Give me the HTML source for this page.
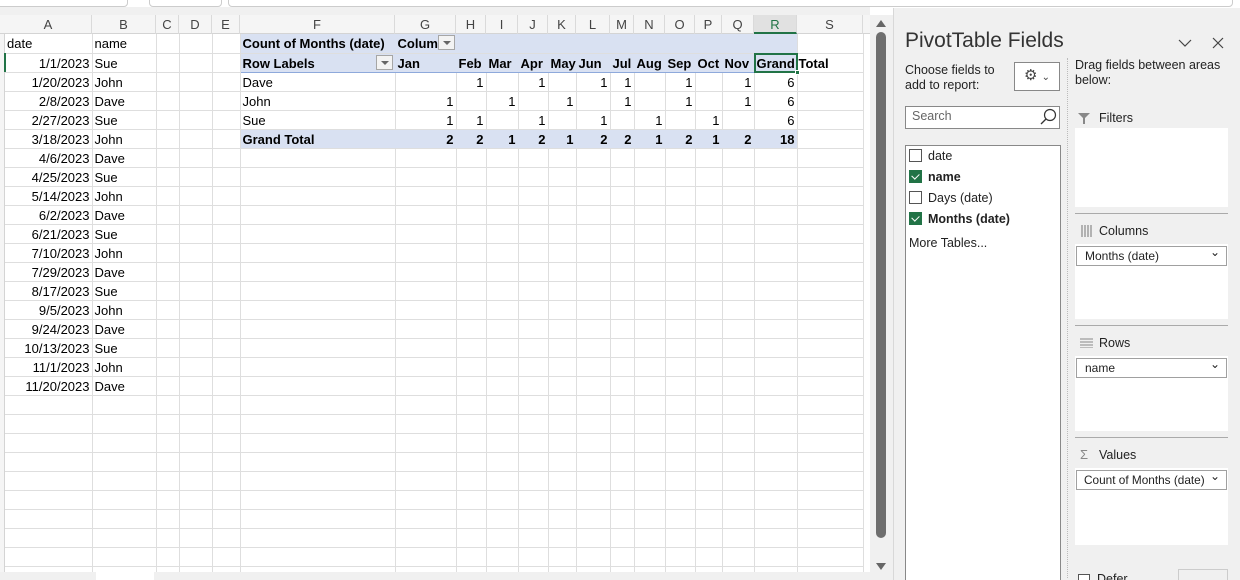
<!DOCTYPE html>
<html><head><meta charset="utf-8"><style>
*{box-sizing:border-box;margin:0;padding:0}
body{width:1240px;height:580px;overflow:hidden;background:#fff;font-family:"Liberation Sans",sans-serif;position:relative}
.abs{position:absolute}
#hdr{position:absolute;left:0;top:15px;height:19px;width:870px;background:#f5f5f5;border-bottom:1px solid #d4d4d4}
#hdr div{position:absolute;top:0;height:19px;border-right:1px solid #dadada;text-align:center;font-size:13px;line-height:19px;color:#444}
#grid{position:absolute;left:5px;top:0;width:858px;border-collapse:collapse;table-layout:fixed;font-size:13px}
#grid td{height:19px;border-right:1px solid #dedede;border-bottom:1px solid #dedede;white-space:nowrap;padding:0;color:#000;vertical-align:top}
#grid td>div{height:18px;line-height:20px;padding:0 2px;position:relative;white-space:nowrap;overflow:visible}
#wrap{position:absolute;left:0;top:34px;width:870px;height:538px;overflow:hidden}
.r{text-align:right}.b{font-weight:bold}.p{background:#d9e1f2}
.dd{position:absolute;right:1px;top:1px;width:17px;height:15px;border:1px solid #a6a6a6;background:#f3f3f3}
.dd:after{content:"";position:absolute;left:4px;top:5px;border-left:4px solid transparent;border-right:4px solid transparent;border-top:4px solid #666}
#panel{position:absolute;left:893px;top:8px;width:347px;height:572px;background:#f0f0f0;border-left:1px solid #d8d8d8;overflow:hidden}
.pt{font-size:13px;color:#222}
.box{position:absolute;background:#fff}
.sel{position:absolute;background:#fff;border:1px solid #a0a0a0;height:20px;font-size:12px;line-height:18px;padding-left:8px;color:#222;white-space:nowrap;overflow:hidden}
.sel:after{content:"⌄";position:absolute;right:6px;top:-4px;font-size:12px}
.cb{display:inline-block;width:13px;height:13px;border:1px solid #555;background:#fff;vertical-align:-2px;margin-right:6px}
.cb.on{background:#217346;border-color:#217346;position:relative}
.cb.on:after{content:"";position:absolute;left:3px;top:1px;width:4px;height:6px;border:solid #fff;border-width:0 1.5px 1.5px 0;transform:rotate(45deg)}
</style></head><body>
<div class="abs" style="left:-5px;top:-6px;width:133px;height:13px;border:1px solid #ccc;border-radius:4px"></div>
<div class="abs" style="left:149px;top:-6px;width:73px;height:13px;border:1px solid #ccc;border-radius:4px"></div>
<div class="abs" style="left:228px;top:-6px;width:1005px;height:13px;border:1px solid #ccc;border-radius:4px"></div>
<div class="abs" style="left:0;top:7px;width:870px;height:8px;background:#f0f0f0"></div>
<div id="hdr"></div>
<div id="wrap"><table id="grid"></table></div>
<div class="abs" style="left:0;top:34px;width:5px;height:538px;background:#f5f5f5;border-right:1px solid #d4d4d4"></div>
<div class="abs" style="left:4px;top:53px;width:2px;height:19px;background:#217346"></div>
<div class="abs" style="left:0;top:572px;width:893px;height:8px;background:#f0f0f0"></div>
<div class="abs" style="left:96px;top:572px;width:58px;height:8px;background:#fff"></div>
<div class="abs" style="left:870px;top:15px;width:23px;height:565px;background:#f0f0f0"></div>
<div class="abs" style="left:876px;top:20px;border-left:5px solid transparent;border-right:5px solid transparent;border-bottom:7px solid #666"></div>
<div class="abs" style="left:876px;top:32px;width:10px;height:506px;background:#6e6e6e;border-radius:5px"></div>
<div class="abs" style="left:876px;top:563px;border-left:5px solid transparent;border-right:5px solid transparent;border-top:7px solid #666"></div>
<div class="abs" style="left:754px;top:53px;width:44px;height:20px;border:2px solid #217346"></div>
<div class="abs" style="left:795px;top:70px;width:5px;height:5px;background:#217346;border:1px solid #fff"></div>
<div id="panel">
<div class="abs" style="left:11px;top:21px;font-size:21px;color:#333">PivotTable Fields</div>
<svg class="abs" style="left:284px;top:30px" width="14" height="10"><path d="M1 2 L7 8 L13 2" fill="none" stroke="#444" stroke-width="1.2"/></svg>
<svg class="abs" style="left:318px;top:29px" width="12" height="12"><path d="M1 1 L11 11 M11 1 L1 11" fill="none" stroke="#444" stroke-width="1.2"/></svg>
<div class="abs pt" style="left:11px;top:55px;line-height:15px;font-size:12.5px">Choose fields to<br>add to report:</div>
<div class="abs" style="left:120px;top:54px;width:46px;height:29px;border:1px solid #888;background:#fff;font-size:15px;line-height:26px;padding-left:9px;color:#444">⚙ <span style="font-size:10px">⌄</span></div>
<div class="abs" style="left:173px;top:50px;border-left:1px dotted #bbb;height:520px"></div>
<div class="abs pt" style="left:181px;top:50px;line-height:15px;font-size:12.5px">Drag fields between areas<br>below:</div>
<div class="abs" style="left:11px;top:98px;width:155px;height:23px;border:1px solid #888;background:#fff;font-size:12.5px;color:#666;padding:2px 6px">Search</div>
<svg class="abs" style="left:146px;top:100px" width="18" height="18"><circle cx="10" cy="7" r="5.5" fill="none" stroke="#333" stroke-width="1.2"/><line x1="6" y1="11" x2="1" y2="16" stroke="#333" stroke-width="1.3"/></svg>
<div class="abs" style="left:11px;top:137px;width:156px;height:440px;border:1px solid #888;background:#fff;font-size:12.5px;color:#222">
 <div style="position:absolute;left:3px;top:0px;line-height:21px">
 <div><span class="cb"></span>date</div>
 <div><span class="cb on"></span><b>name</b></div>
 <div><span class="cb"></span>Days (date)</div>
 <div><span class="cb on"></span><b>Months (date)</b></div>
 <div style="margin-top:3px">More Tables...</div></div></div>
<svg class="abs" style="left:184px;top:105px" width="12" height="11"><path d="M0 0 H12 L7 5 V11 H5 V5 Z" fill="#888"/></svg>
<div class="abs pt" style="left:205px;top:103px;font-size:12.5px">Filters</div>
<div class="box" style="left:181px;top:120px;width:153px;height:79px"></div>
<div class="abs" style="left:181px;top:205px;width:153px;height:1px;background:#aaa"></div>
<svg class="abs" style="left:187px;top:217px" width="12" height="12"><path d="M1 0V12M4 0V12M7 0V12M10 0V12" stroke="#888" stroke-width="1.2"/></svg>
<div class="abs pt" style="left:205px;top:216px;font-size:12.5px">Columns</div>
<div class="box" style="left:181px;top:236px;width:153px;height:75px"></div>
<div class="sel" style="left:182px;top:238px;width:151px">Months (date)</div>
<div class="abs" style="left:181px;top:317px;width:153px;height:1px;background:#aaa"></div>
<svg class="abs" style="left:186px;top:330px" width="13" height="10"><path d="M0 1H13M0 4H13M0 7H13M0 10H13" stroke="#888" stroke-width="1.1"/></svg>
<div class="abs pt" style="left:205px;top:328px;font-size:12.5px">Rows</div>
<div class="box" style="left:181px;top:348px;width:153px;height:75px"></div>
<div class="sel" style="left:182px;top:350px;width:151px">name</div>
<div class="abs" style="left:181px;top:429px;width:153px;height:1px;background:#aaa"></div>
<div class="abs pt" style="left:186px;top:439px;font-size:13px;color:#888">Σ</div>
<div class="abs pt" style="left:205px;top:440px;font-size:12.5px">Values</div>
<div class="box" style="left:181px;top:460px;width:153px;height:77px"></div>
<div class="sel" style="left:182px;top:462px;width:151px;padding-left:7px;font-size:11.8px">Count of Months (date)</div>
<div class="abs" style="left:184px;top:566px;width:12px;height:12px;border:1px solid #555;background:#fff"></div>
<div class="abs pt" style="left:203px;top:564px;font-size:12.5px">Defer</div>
<div class="abs" style="left:284px;top:561px;width:50px;height:14px;border:1px solid #ccc"></div>
</div>
<script>
var W=[87,64,23,33,28,155,61,30,32,30,28,34,24,31,30,27,32,43,66],L="ABCDEFGHIJKLMNOPQRS";
var h=document.getElementById('hdr'),x=5,s='';
for(var i=0;i<19;i++){s+='<div style="left:'+x+'px;width:'+W[i]+'px'+(i==17?';background:#e1e1e1;border-bottom:2px solid #217346;color:#217346':'')+'">'+L[i]+'</div>';x+=W[i];}
h.innerHTML=s;
var col='<colgroup>'+W.map(function(w){return '<col style="width:'+w+'px">'}).join('')+'</colgroup>';
var dates=[["date","name"],["1/1/2023","Sue"],["1/20/2023","John"],["2/8/2023","Dave"],["2/27/2023","Sue"],["3/18/2023","John"],["4/6/2023","Dave"],["4/25/2023","Sue"],["5/14/2023","John"],["6/2/2023","Dave"],["6/21/2023","Sue"],["7/10/2023","John"],["7/29/2023","Dave"],["8/17/2023","Sue"],["9/5/2023","John"],["9/24/2023","Dave"],["10/13/2023","Sue"],["11/1/2023","John"],["11/20/2023","Dave"]];
var mon=["Jan","Feb","Mar","Apr","May","Jun","Jul","Aug","Sep","Oct","Nov","Grand"];
var piv={2:["Dave","","1","","1","","1","1","","1","","1","6"],3:["John","1","","1","","1","","1","","1","","1","6"],4:["Sue","1","1","","1","","1","","1","","1","","6"],5:["Grand Total","2","2","1","2","1","2","2","1","2","1","2","18"]};
var t=col;
for(var r=0;r<29;r++){t+='<tr>';
 for(var c=0;c<19;c++){var txt='',cls='',st='';
  if(r<dates.length&&c<2){txt=dates[r][c];if(r>0&&c==0)cls='r';}
  if(c>=5&&c<=17){
   if(r==0){cls='p b';if(c==5)txt='Count of Months (date)';if(c==6)txt='Colum<span class="dd"></span>';}
   else if(r==1){cls='p b';st='border-bottom:1px solid #8ea9db;';if(c==5)txt='Row Labels<span class="dd" style="right:2px"></span>';else txt=mon[c-6];}
   else if(piv[r]){txt=piv[r][c-5];if(c>5)cls='r';if(r==5){cls+=' p b';st='border-top:1px solid #8ea9db;';}}
   if(r<=1||r==5)st+='border-right-color:'+(c==17?'#dedede':'#d9e1f2')+';';
  }
  if(r==1&&c==18){txt='<b>Total</b>';}
  t+='<td class="'+cls+'" style="'+st+'"><div'+(r==1&&c==18?' style="padding-left:1px"':'')+'>'+txt+'</div></td>';}
 t+='</tr>';}
document.getElementById('grid').innerHTML=t;
</script>
</body></html>
